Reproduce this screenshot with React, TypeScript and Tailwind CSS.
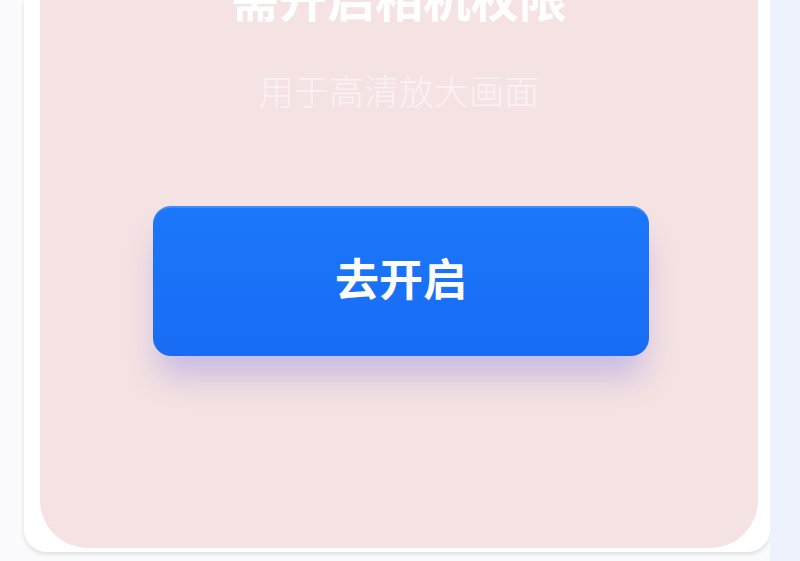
export default function App() {
  return (
    <main
      className="w-[800px] h-[561px] overflow-hidden flex bg-[#f9fafc]"
      style={{ fontFamily: '"Noto Sans CJK SC", "Noto Sans", sans-serif' }}
    >
      {/* left margin */}
      <div className="w-[24px] shrink-0 bg-[#fbfbfd]" />

      {/* permission card */}
      <div className="w-[746px] h-[552px] shrink-0 flex flex-col bg-white rounded-b-[22px] pl-[16px] pr-[12px] pb-[4px] shadow-[0_2px_4px_rgba(0,0,0,0.12)]">
        <div className="flex-1 flex flex-col items-center bg-[#f5e2e2] rounded-b-[48px] overflow-hidden">
          <h1 className="mt-[-28px] text-[48px] leading-none font-bold text-white">需开启相机权限</h1>
          <p className="mt-[52px] text-[35px] leading-none font-light text-[#fbf1f1]">用于高清放大画面</p>
          <button className="mt-[99px] ml-[4px] w-[496px] h-[150px] pb-[10px] rounded-[18px] bg-linear-to-b from-[#1c77fa] to-[#186cf4] border-t-2 border-[#3d8cfb] text-white text-[44px] font-bold leading-none shadow-[0_26px_32px_-6px_rgba(90,95,230,0.3)]">
            去开启
          </button>
        </div>
      </div>

      {/* right margin */}
      <div className="flex-1 bg-[#eef2fc]" />
    </main>
  )
}
